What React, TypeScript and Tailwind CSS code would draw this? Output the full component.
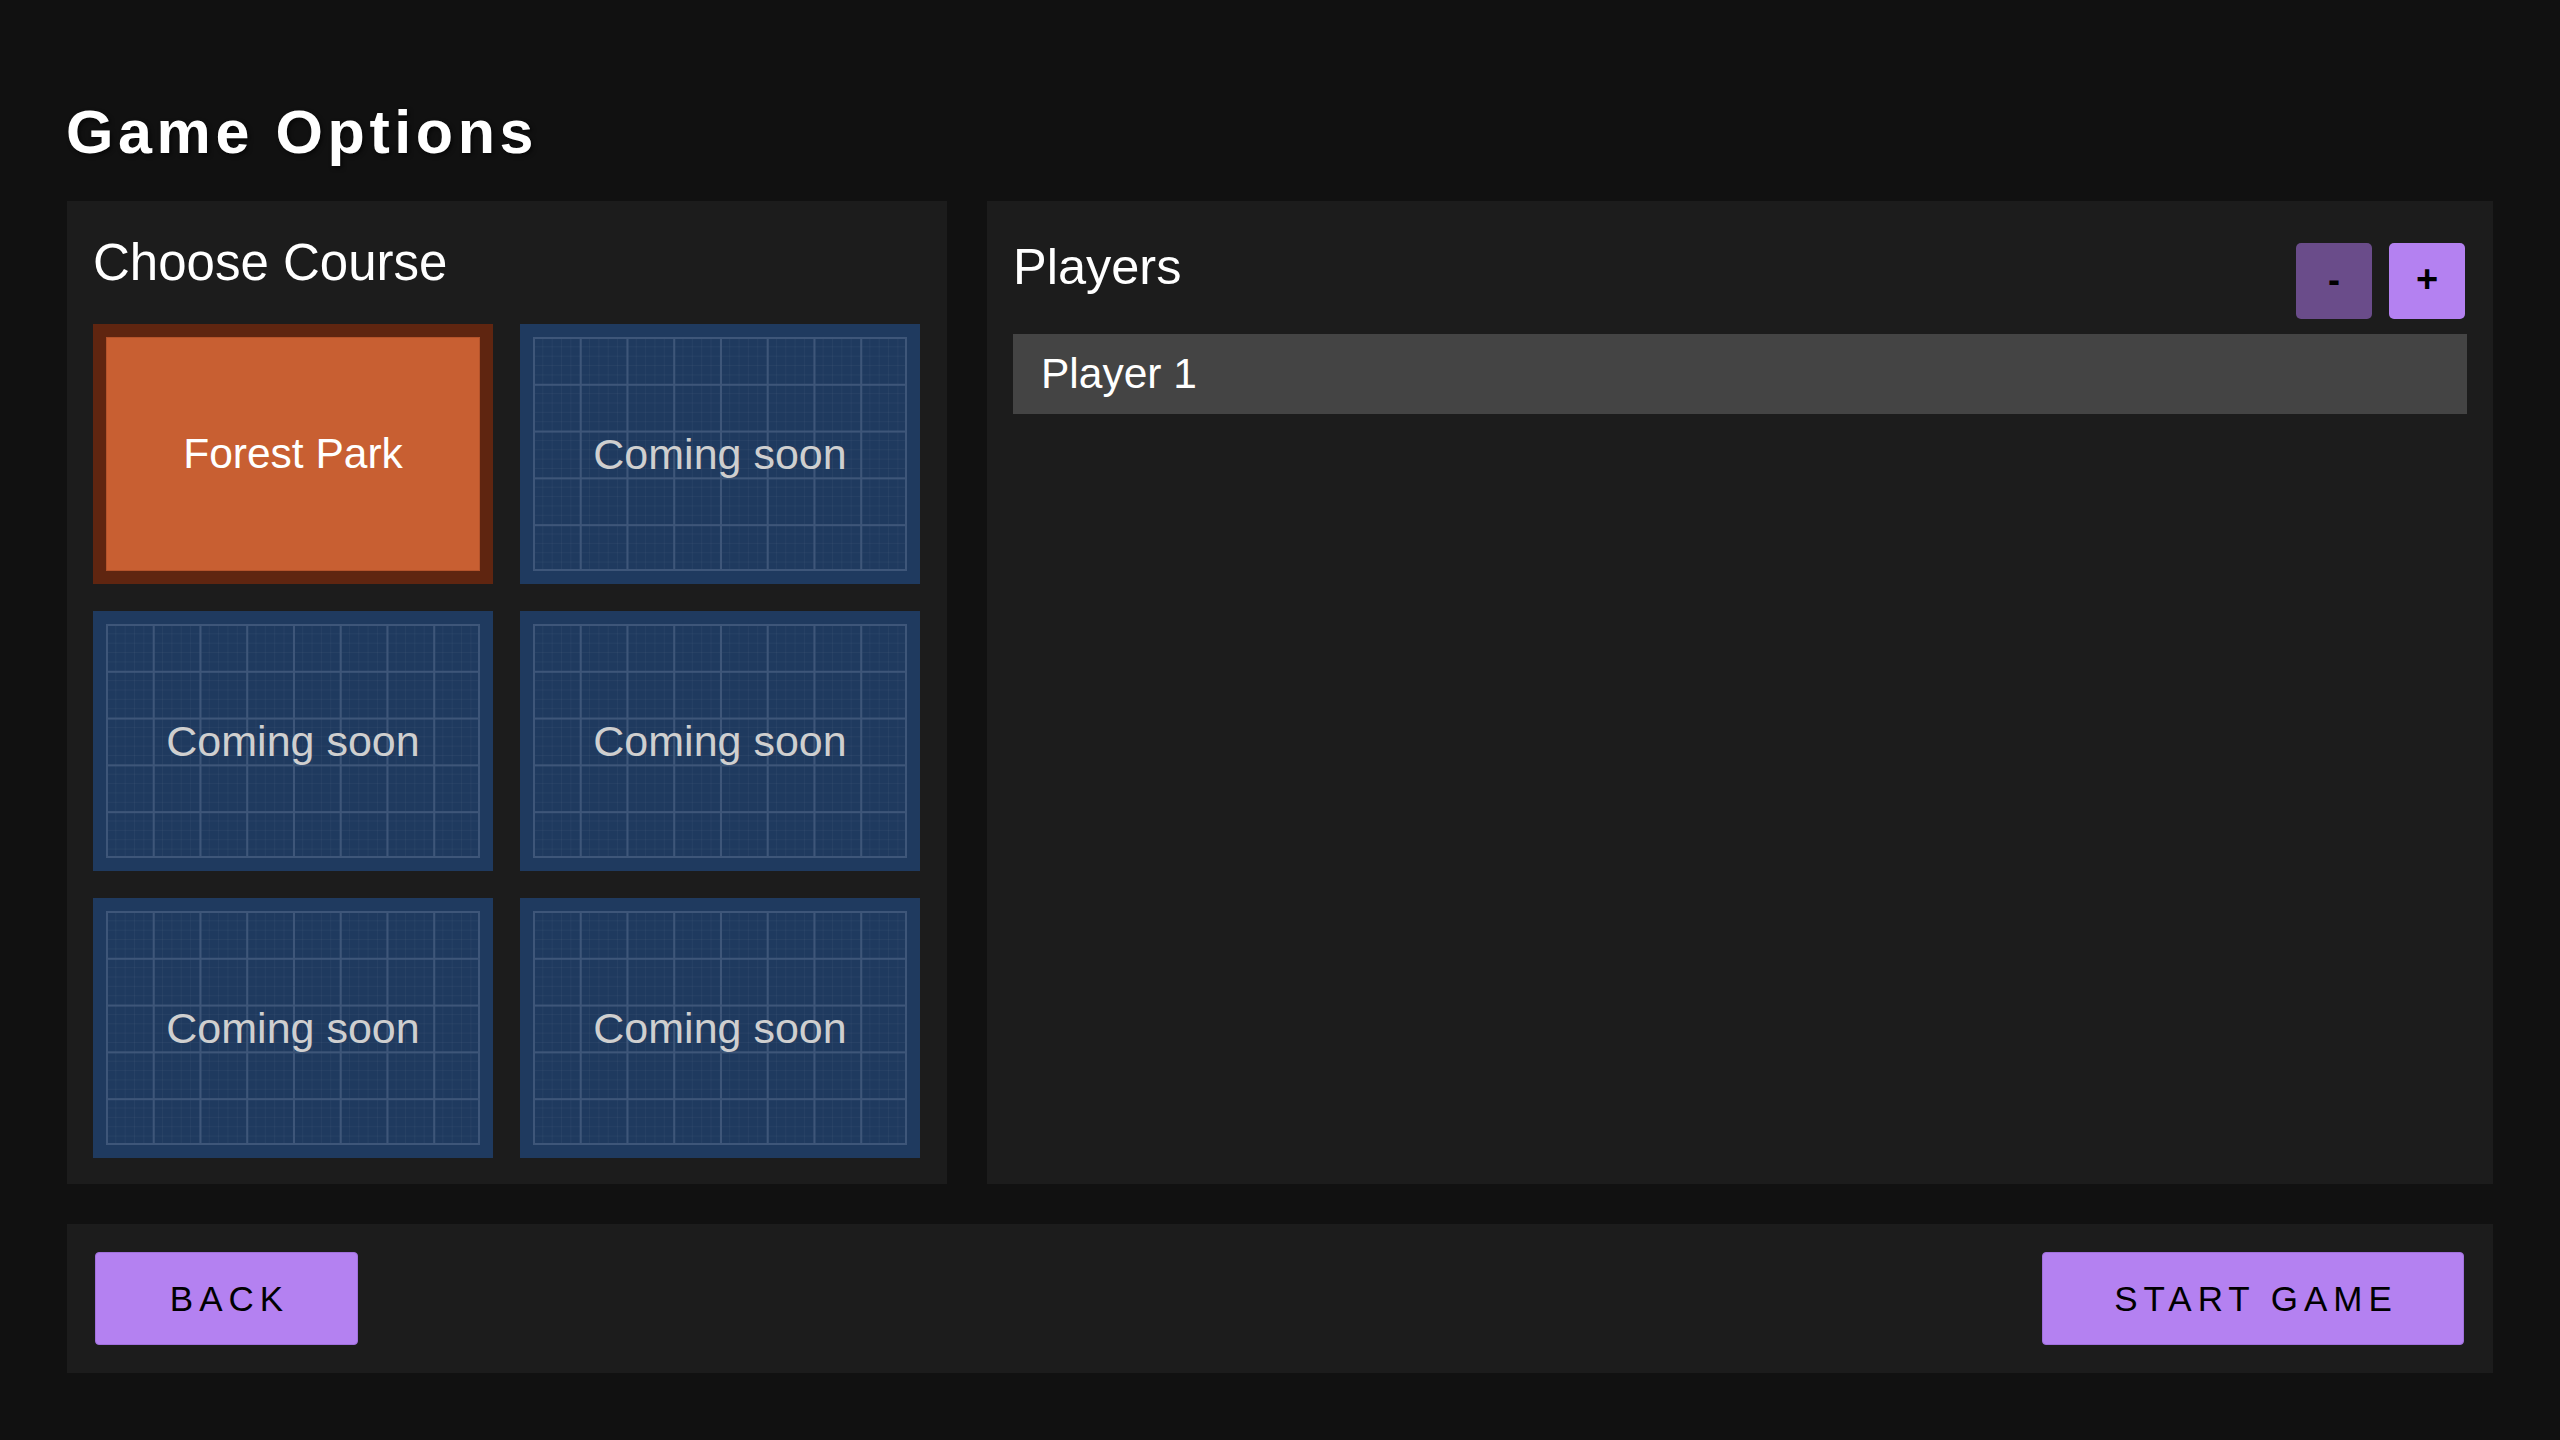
import React from "react";

const gridBg =
  "bg-[linear-gradient(to_right,#3e5679_2px,transparent_2px),linear-gradient(to_bottom,#3e5679_2px,transparent_2px),linear-gradient(to_right,rgba(255,255,255,0.035)_1px,transparent_1px),linear-gradient(to_bottom,rgba(255,255,255,0.035)_1px,transparent_1px)]";

function ComingSoon() {
  return (
    <div className="w-[400px] h-[260px] bg-[#1f3a5f] p-[13px]">
      <div
        className={`w-full h-full box-border border-2 border-[#3e5679] bg-origin-border ${gridBg} bg-[size:12.5%_20%,12.5%_20%,2.5%_4%,2.5%_4%] flex items-center justify-center`}
      >
        <span className="text-[43px] text-[#cfcfcf] leading-none">Coming soon</span>
      </div>
    </div>
  );
}

function Selected() {
  return (
    <div className="w-[400px] h-[260px] bg-[#5f2510] p-[13px]">
      <div className="w-full h-full bg-[#c85f32] border border-[#b4532b] flex items-center justify-center">
        <span className="text-[42.5px] text-white leading-none">Forest Park</span>
      </div>
    </div>
  );
}

export default function App() {
  return (
    <div
      className="w-full h-[1440px] bg-[#111111] p-[67px] flex flex-col text-white"
      style={{ fontFamily: '"Liberation Sans", Arial, sans-serif' }}
    >
      <h1 className="mt-[31px] mb-[3px] -ml-[1px] text-[61px] leading-[69px] font-bold tracking-[4.6px] [text-shadow:2px_2px_4px_rgba(0,0,0,0.6)]">
        Game Options
      </h1>
      <div className="mt-[31px] flex-1 flex gap-[40px] min-h-0">
        <div className="w-[880px] bg-[#1c1c1c] pt-[26px] px-[26px]">
          <h2 className="mt-[7px] text-[51px] leading-[58px]">Choose Course</h2>
          <div className="mt-[32px] grid grid-cols-[400px_400px] gap-[27px]">
            <Selected />
            <ComingSoon />
            <ComingSoon />
            <ComingSoon />
            <ComingSoon />
            <ComingSoon />
          </div>
        </div>
        <div className="flex-1 bg-[#1c1c1c] pt-[26px] px-[26px]">
          <div className="flex justify-between items-start">
            <h2 className="mt-[11px] mb-[3px] text-[50.5px] leading-[58px]">Players</h2>
            <div className="mt-[16px] mr-[2px] flex gap-[17px]">
              <button className="w-[76px] h-[76px] rounded-[5px] bg-[#6a4c8a] text-black text-[36px] font-bold leading-none flex items-center justify-center pb-[2px]">
                -
              </button>
              <button className="w-[76px] h-[76px] rounded-[5px] bg-[#b481f1] text-black text-[38px] font-bold leading-none flex items-center justify-center pb-[4px]">
                +
              </button>
            </div>
          </div>
          <div className="mt-[15px] h-[80px] bg-[#444444] pl-[28px] flex items-center text-[42.5px] leading-none">
            Player 1
          </div>
        </div>
      </div>
      <div className="mt-[40px] h-[149px] bg-[#1c1c1c] pl-[28px] pr-[29px] flex items-center justify-between">
        <button className="w-[263px] h-[93px] rounded-[4px] bg-[#b481f1] border border-[#a070dc] text-black text-[35px] tracking-[6px] pl-[6px] leading-none flex items-center justify-center">
          BACK
        </button>
        <button className="w-[422px] h-[93px] rounded-[4px] bg-[#b481f1] border border-[#a070dc] text-black text-[35px] tracking-[6px] pl-[6px] leading-none flex items-center justify-center">
          START GAME
        </button>
      </div>
    </div>
  );
}
